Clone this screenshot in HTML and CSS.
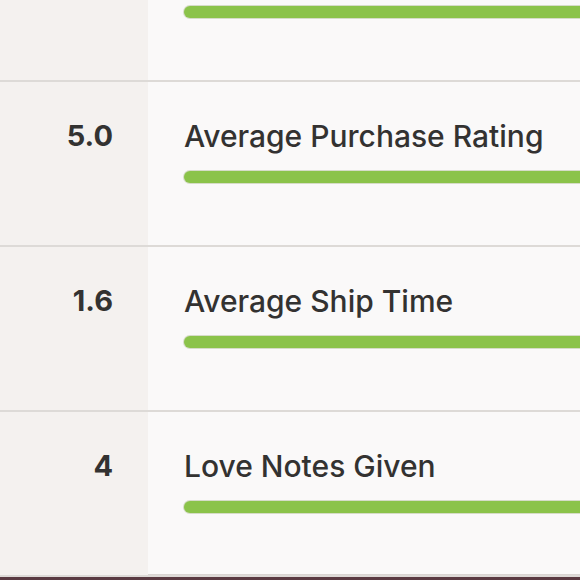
FILE: index.html
```html
<!DOCTYPE html>
<html>
<head>
<meta charset="utf-8">
<link rel="stylesheet" href="styles.css">
</head>
<body>
<div class="stats">
  <div class="row row-cut">
    <div class="num"></div>
    <div class="info"><div class="bar"></div></div>
  </div>
  <div class="row">
    <div class="num">5.0</div>
    <div class="info"><div class="label">Average Purchase Rating</div><div class="bar"></div></div>
  </div>
  <div class="row">
    <div class="num">1.6</div>
    <div class="info"><div class="label">Average Ship Time</div><div class="bar"></div></div>
  </div>
  <div class="row">
    <div class="num">4</div>
    <div class="info"><div class="label">Love Notes Given</div><div class="bar"></div></div>
  </div>
</div>
<div class="footer-line"></div>
</body>
</html>
```
FILE: styles.css
```css
html, body {
  margin: 0;
  padding: 0;
  height: 100%;
  background: #faf9f9;
  overflow: hidden;
}
body {
  font-family: Inter, "Open Sans", sans-serif;
  color: #333231;
}
.stats {
  display: flex;
  flex-direction: column;
}
.row {
  display: grid;
  grid-template-columns: 148px 1fr;
  height: 163px;
  border-bottom: 2px solid #dddad7;
}
.row-cut {
  height: 80px;
}
.num {
  background: #f4f1ef;
  text-align: right;
  padding-right: 35px;
  padding-top: 38px;
  font-size: 29px;
  font-weight: 700;
  line-height: 32px;
}
.row-cut .num { padding-top: 0; }
.info {
  padding-left: 36px;
  padding-top: 38px;
  overflow: hidden;
}
.row-cut .info { padding-top: 5px; }
.label {
  font-size: 30px;
  font-weight: 500;
  line-height: 32px;
  white-space: nowrap;
}
.bar {
  margin-top: 19px;
  height: 12px;
  border-radius: 6px 0 0 6px;
  background: #8bc34a;
  box-shadow: 0 0 0 1px #d6dcc8;
  margin-right: -10px;
}
.row-cut .bar { margin-top: 1px; }
.footer-line {
  height: 3px;
  background: #d9d5d2;
  border-bottom: 3px solid #5a3a42;
  margin-top: -3px;
}
```
